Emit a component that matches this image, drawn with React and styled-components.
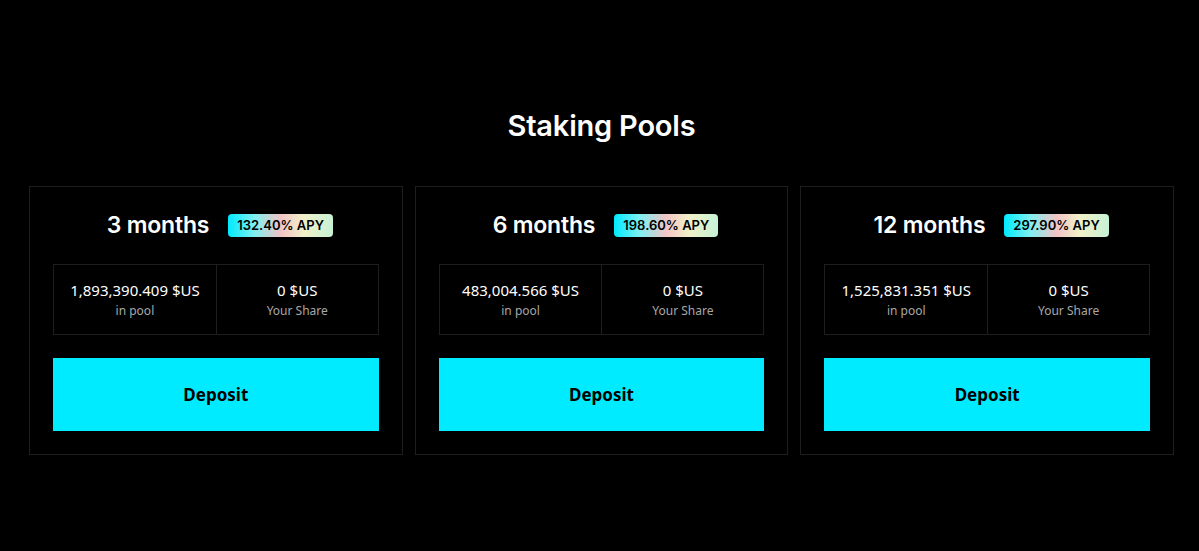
import React from 'react';
import styled, { createGlobalStyle } from 'styled-components';

const GlobalStyle = createGlobalStyle`
  html, body {
    margin: 0;
    padding: 0;
    background: #000;
  }
  body {
    font-family: "Noto Sans", "Open Sans", sans-serif;
    color: #fff;
  }
`

const Page = styled.main`
  min-height: 551px;
  padding: 108px 25px 0 29px;
  box-sizing: border-box;
`

const Title = styled.h1`
  margin: 0 0 42px;
  text-align: center;
  font-family: Inter, "Noto Sans", sans-serif;
  font-size: 29px;
  font-weight: 600;
  line-height: 36px;
  letter-spacing: -0.2px;
`

const Grid = styled.div`
  display: grid;
  grid-template-columns: repeat(3, 1fr);
  gap: 12px;
`

const Card = styled.section`
  border: 1px solid #1e1e1e;
  padding: 26px 23px 23px;
  display: flex;
  flex-direction: column;
`

const Head = styled.div`
  display: flex;
  align-items: center;
  justify-content: center;
  gap: 19px;
  height: 24px;
  padding-left: 8px;
`

const Period = styled.h2`
  margin: 0;
  font-family: Inter, "Noto Sans", sans-serif;
  font-size: 23px;
  font-weight: 600;
  letter-spacing: -0.2px;
`

const Badge = styled.span`
  display: inline-flex;
  align-items: center;
  height: 23px;
  padding: 0 9px;
  border-radius: 4px;
  background: linear-gradient(90deg, #00eaff 0%, #7ff0f0 25%, #f3c4c6 50%, #f1f0c8 72%, #c6f2d6 100%);
  color: #000;
  font-family: Inter, "Noto Sans", sans-serif;
  font-size: 13px;
  font-weight: 600;
`

const Stats = styled.div`
  margin-top: 27px;
  display: grid;
  grid-template-columns: 1fr 1fr;
  border: 1px solid #1e1e1e;
  height: 71px;
  box-sizing: border-box;
`

const Stat = styled.div`
  display: flex;
  flex-direction: column;
  align-items: center;
  justify-content: center;
  & + & {
    border-left: 1px solid #1e1e1e;
  }
`

const Value = styled.span`
  font-size: 15px;
  line-height: 20px;
  color: #fff;
`

const Label = styled.span`
  margin-top: 2px;
  font-size: 12px;
  line-height: 17px;
  color: #a8a8a8;
`

const Deposit = styled.button`
  margin-top: 23px;
  height: 73px;
  border: none;
  background: #00ebff;
  color: #000;
  font-family: "Noto Sans", sans-serif;
  font-size: 17px;
  font-weight: 700;
  cursor: pointer;
`

const pools = [
  { period: '3 months', apy: '132.40%', pool: '1,893,390.409' },
  { period: '6 months', apy: '198.60%', pool: '483,004.566' },
  { period: '12 months', apy: '297.90%', pool: '1,525,831.351' },
];

export default function App() {
  return (
    <>
      <GlobalStyle />
      <Page>
        <Title>Staking Pools</Title>
        <Grid>
          {pools.map(({ period, apy, pool }) => (
            <Card key={period}>
              <Head>
                <Period>{period}</Period>
                <Badge>{apy} APY</Badge>
              </Head>
              <Stats>
                <Stat>
                  <Value>{pool} $US</Value>
                  <Label>in pool</Label>
                </Stat>
                <Stat>
                  <Value>0 $US</Value>
                  <Label>Your Share</Label>
                </Stat>
              </Stats>
              <Deposit>Deposit</Deposit>
            </Card>
          ))}
        </Grid>
      </Page>
    </>
  );
}
